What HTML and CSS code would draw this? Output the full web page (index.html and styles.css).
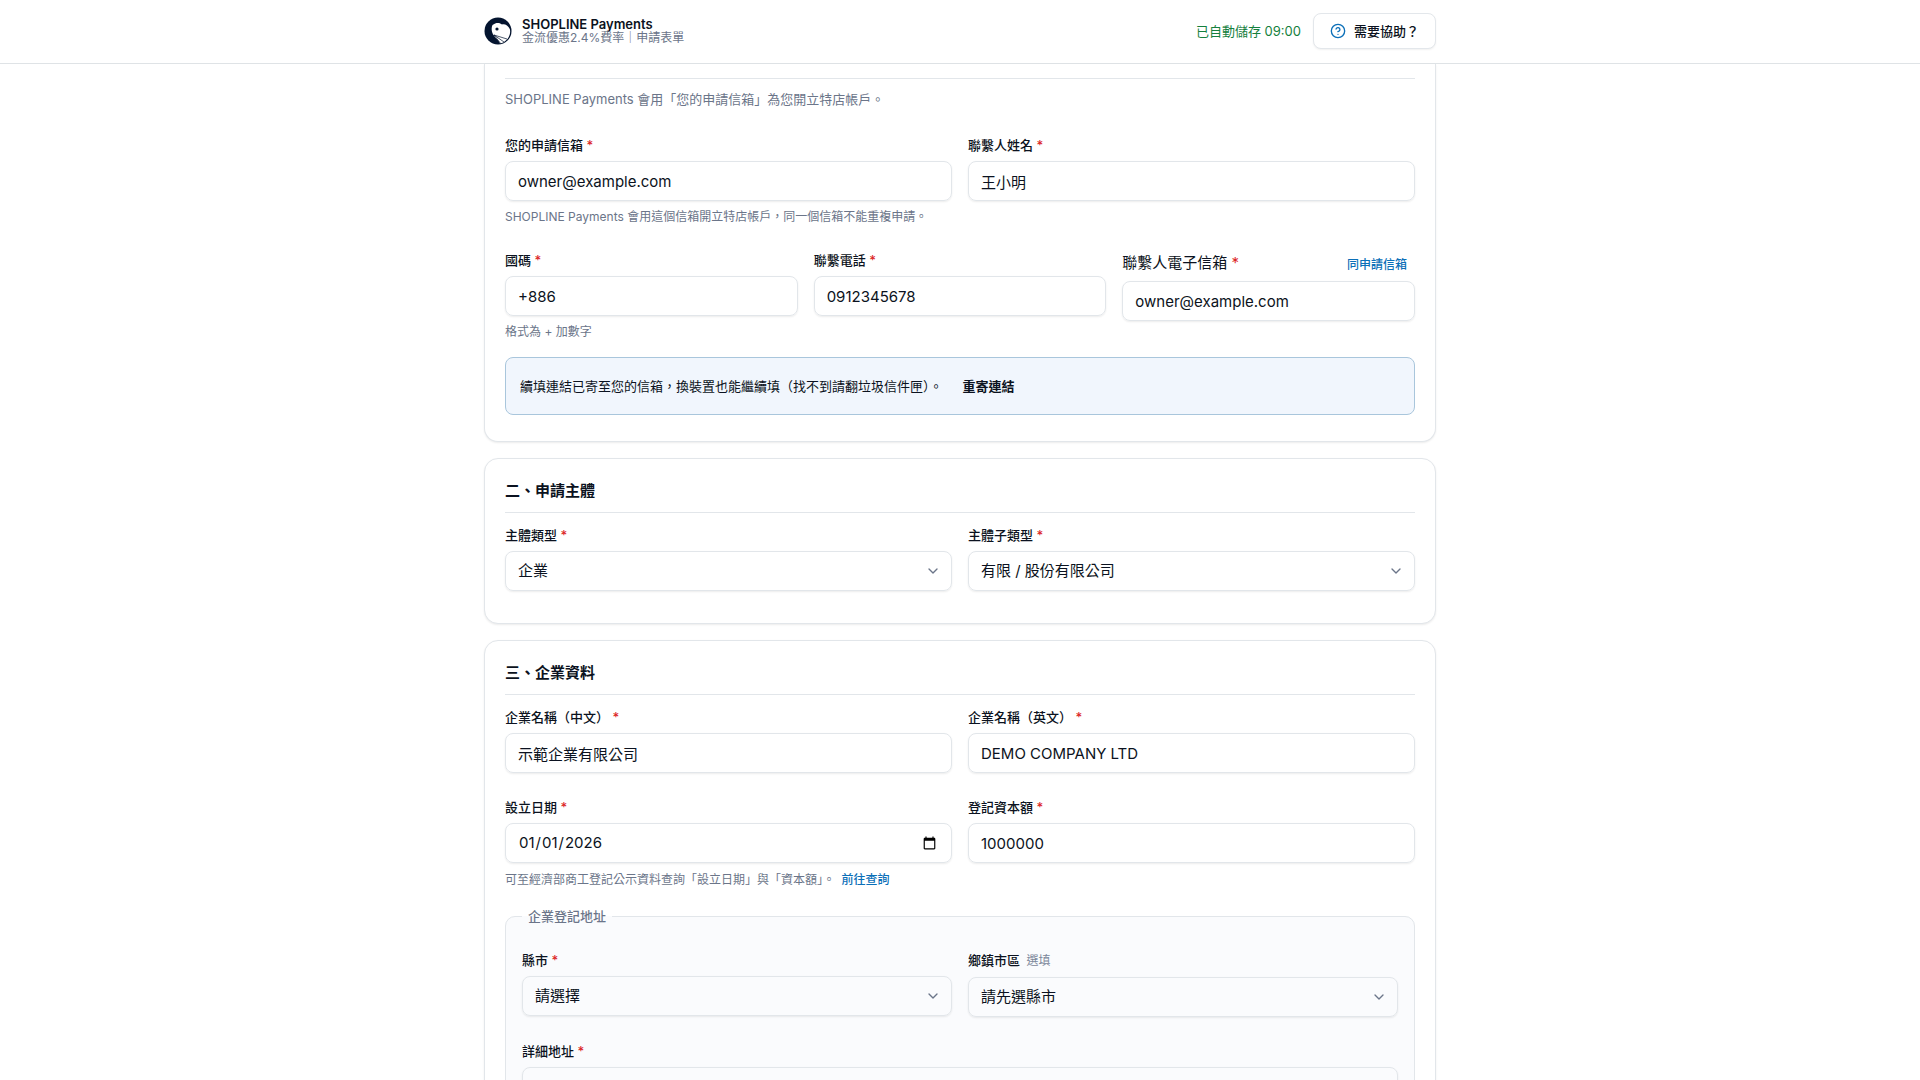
FILE: index.html
```html
<!DOCTYPE html>
<html lang="zh-Hant">
<head>
    <meta charset="UTF-8">
    <meta name="viewport" content="width=device-width, initial-scale=1.0">
    <title>SHOPLINE Payments</title>
    <link rel="stylesheet" href="styles.css">
</head>
<body>
    <header class="topbar">
        <div class="topbar-inner">
            <svg class="logo" viewBox="0 0 28 28" aria-hidden="true">
                <circle cx="14" cy="14" r="13.500" fill="#04142f"/>
                <path d="M8.500 8C12 5 16 5.500 18 7.500C21 6.800 24 8.500 25.800 12C27.500 18 23 25 16 26.500C15 23.500 11 21 10 18.500C7.500 16 7 11 8.500 8Z" fill="#fff"/>
                <circle cx="13" cy="12" r="1.600" fill="#04142f"/>
                <path d="M10 18L23 22M10 18L20 25M10 18L17 27" fill="none" stroke="#04142f" stroke-width=".7"/>
            </svg>
            <div class="brand">
                <strong>SHOPLINE Payments</strong>
                <span>金流優惠2.4%費率｜申請表單</span>
            </div>
            <span class="saved">已自動儲存 09:00</span>
            <button type="button" class="help">
                <svg viewBox="0 0 24 24" aria-hidden="true"><circle cx="12" cy="12" r="10"/><path d="M9.090 9a3 3 0 0 1 5.830 1c0 2-3 3-3 3M12 17h.01"/></svg>
                需要協助？
            </button>
        </div>
    </header>

    <main class="page">
        <!-- 聯絡資料 -->
        <section class="card card-first">
            <p class="intro">SHOPLINE Payments 會用「您的申請信箱」為您開立特店帳戶。</p>
            <div class="row two">
                <div class="field">
                    <label for="apply-email">您的申請信箱 <i>*</i></label>
                    <input type="email" id="apply-email" value="owner@example.com">
                    <p class="hint">SHOPLINE Payments 會用這個信箱開立特店帳戶，同一個信箱不能重複申請。</p>
                </div>
                <div class="field">
                    <label for="contact-name">聯繫人姓名 <i>*</i></label>
                    <input type="text" id="contact-name" value="王小明">
                </div>
            </div>
            <div class="row three">
                <div class="field">
                    <label for="country-code">國碼 <i>*</i></label>
                    <input type="text" id="country-code" value="+886">
                    <p class="hint">格式為 + 加數字</p>
                </div>
                <div class="field">
                    <label for="phone">聯繫電話 <i>*</i></label>
                    <input type="tel" id="phone" value="0912345678">
                </div>
                <div class="field">
                    <div class="label-line">
                        <label for="contact-email">聯繫人電子信箱 <i>*</i></label>
                        <button type="button" class="link">同申請信箱</button>
                    </div>
                    <input type="email" id="contact-email" value="owner@example.com">
                </div>
            </div>
            <div class="notice">
                <span>續填連結已寄至您的信箱，換裝置也能繼續填（找不到請翻垃圾信件匣）。</span>
                <button type="button">重寄連結</button>
            </div>
        </section>

        <!-- 申請主體 -->
        <section class="card">
            <h2>二、申請主體</h2>
            <div class="row two">
                <div class="field">
                    <label for="entity-type">主體類型 <i>*</i></label>
                    <div class="select">
                        <select id="entity-type"><option>企業</option></select>
                        <svg viewBox="0 0 24 24" aria-hidden="true"><path d="m6 9 6 6 6-6"/></svg>
                    </div>
                </div>
                <div class="field">
                    <label for="entity-subtype">主體子類型 <i>*</i></label>
                    <div class="select">
                        <select id="entity-subtype"><option>有限 / 股份有限公司</option></select>
                        <svg viewBox="0 0 24 24" aria-hidden="true"><path d="m6 9 6 6 6-6"/></svg>
                    </div>
                </div>
            </div>
        </section>

        <!-- 企業資料 -->
        <section class="card">
            <h2>三、企業資料</h2>
            <div class="row two">
                <div class="field">
                    <label for="name-zh">企業名稱（中文） <i>*</i></label>
                    <input type="text" id="name-zh" value="示範企業有限公司">
                </div>
                <div class="field">
                    <label for="name-en">企業名稱（英文） <i>*</i></label>
                    <input type="text" id="name-en" value="DEMO COMPANY LTD">
                </div>
            </div>
            <div class="row two">
                <div class="field">
                    <label for="founded">設立日期 <i>*</i></label>
                    <input type="date" id="founded" value="2026-01-01">
                    <p class="hint">可至經濟部商工登記公示資料查詢「設立日期」與「資本額」。 <a href="#">前往查詢</a></p>
                </div>
                <div class="field">
                    <label for="capital">登記資本額 <i>*</i></label>
                    <input type="text" id="capital" value="1000000">
                </div>
            </div>
            <fieldset class="address">
                <legend>企業登記地址</legend>
                <div class="row two">
                    <div class="field">
                        <label for="city">縣市 <i>*</i></label>
                        <div class="select">
                            <select id="city"><option>請選擇</option></select>
                            <svg viewBox="0 0 24 24" aria-hidden="true"><path d="m6 9 6 6 6-6"/></svg>
                        </div>
                    </div>
                    <div class="field">
                        <label for="district">鄉鎮市區 <small>選填</small></label>
                        <div class="select">
                            <select id="district"><option>請先選縣市</option></select>
                            <svg viewBox="0 0 24 24" aria-hidden="true"><path d="m6 9 6 6 6-6"/></svg>
                        </div>
                    </div>
                </div>
                <div class="row">
                    <div class="field">
                        <label for="street">詳細地址 <i>*</i></label>
                        <input type="text" id="street">
                    </div>
                </div>
            </fieldset>
        </section>
    </main>
</body>
</html>
```
FILE: styles.css
```css
* {
    box-sizing: border-box;
}
body {
    margin: 0;
    height: 100vh;
    overflow: hidden;
    background: #fff;
    color: #0b1220;
    font-family: Inter, "Noto Sans CJK TC", sans-serif;
    font-size: 15px;
    line-height: 24px;
}
p, h2 {
    margin: 0;
}
button, input, select {
    font: inherit;
    color: inherit;
}
button {
    cursor: pointer;
}

/* Header */
.topbar {
    height: 64px;
    border-bottom: 1px solid #dfe3e6;
    background: #fff;
}
.topbar-inner {
    display: flex;
    align-items: center;
    max-width: 952px;
    height: 100%;
    margin: 0 auto;
    padding-bottom: 1px;
}
.logo {
    width: 28px;
    height: 28px;
}
.brand {
    display: flex;
    flex-direction: column;
    margin-left: 10px;
    margin-right: auto;
    font-size: 13px;
    line-height: 14px;
}
.brand strong {
    font-weight: 600;
}
.brand span {
    font-size: 12px;
    color: #6b7589;
}
.saved {
    font-size: 13px;
    color: #15803d;
}
.help {
    display: flex;
    align-items: center;
    gap: 8px;
    height: 36px;
    margin-left: 12px;
    padding: 0 16px;
    border: 1px solid #e3e7eb;
    border-radius: 8px;
    background: #fff;
    box-shadow: 0 1px 2px rgba(0, 0, 0, 0.06);
    font-size: 13px;
    font-weight: 500;
}
.help svg {
    width: 16px;
    height: 16px;
    fill: none;
    stroke: #0b6fb8;
    stroke-width: 2;
    stroke-linecap: round;
    stroke-linejoin: round;
}

/* Cards */
.page {
    display: flex;
    flex-direction: column;
    gap: 16px;
    max-width: 952px;
    margin: 0 auto;
}
.card {
    padding: 20px 20px 32px;
    border: 1px solid #e2e6ea;
    border-radius: 14px;
    background: #fff;
    box-shadow: 0 1px 2px rgba(0, 0, 0, 0.08);
}
.card-first {
    padding-top: 14px;
    padding-bottom: 26px;
    border-top: 0;
    border-radius: 0 0 14px 14px;
}
.card h2 {
    margin-bottom: 12px;
    padding-bottom: 9px;
    border-bottom: 1px solid #e2e6ea;
    font-size: 15px;
    font-weight: 600;
    line-height: 24px;
}
.intro {
    margin-bottom: 24px;
    padding: 9px 0 1px;
    border-top: 1px solid #e2e6ea;
    font-size: 13px;
    line-height: 22px;
    color: #6b7589;
}

/* Fields */
.row {
    display: grid;
    gap: 16px;
    align-items: start;
}
.row + .row {
    margin-top: 24px;
}
.two {
    grid-template-columns: repeat(2, 1fr);
}
.three {
    grid-template-columns: repeat(3, 1fr);
}
.field {
    display: flex;
    flex-direction: column;
    gap: 6px;
}
.field label {
    font-size: 13px;
    font-weight: 500;
    line-height: 20px;
}
.field i {
    font-style: normal;
    color: #dc2626;
}
.field small {
    margin-left: 3px;
    font-size: 12px;
    font-weight: 400;
    color: #7c879a;
}
.field input, .field select {
    width: 100%;
    height: 40px;
    padding: 0 12px;
    border: 1px solid #e2e6ea;
    border-radius: 8px;
    background: transparent;
    box-shadow: 0 1px 2px rgba(0, 0, 0, 0.08);
}
.field select {
    appearance: none;
}
.select {
    display: grid;
    align-items: center;
}
.select > * {
    grid-area: 1 / 1;
}
.select svg {
    justify-self: end;
    width: 16px;
    height: 16px;
    margin-right: 11px;
    fill: none;
    stroke: #6b7589;
    stroke-width: 2;
    stroke-linecap: round;
    stroke-linejoin: round;
    pointer-events: none;
}
.label-line {
    display: flex;
    align-items: center;
    justify-content: space-between;
    padding-right: 8px;
}
.field .label-line label {
    font-size: 15px;
    font-weight: 400;
    line-height: 25px;
}
.link {
    padding: 4px 0 0;
    border: 0;
    background: none;
    font-size: 12px;
    font-weight: 500;
    line-height: 20px;
    color: #0b6fb8;
}
.hint {
    font-size: 12px;
    line-height: 19px;
    color: #6b7589;
}
.hint a {
    display: inline-block;
    margin-left: 3px;
    padding: 1px 0;
    font-weight: 500;
    color: #0b6fb8;
    text-decoration: none;
}

.notice {
    display: flex;
    align-items: center;
    gap: 20px;
    min-height: 58px;
    margin-top: 16px;
    padding: 0 14px;
    border: 1px solid #a9c6dc;
    border-radius: 8px;
    background: #f1f6fd;
    font-size: 13px;
}
.notice button {
    padding: 0;
    border: 0;
    background: none;
    font-weight: 600;
}

.address {
    margin: 16px 0 0;
    padding: 24px 16px;
    border: 1px solid #e2e6ea;
    border-radius: 10px;
    background: #fafbfd;
}
.address legend {
    padding: 0 6px;
    font-size: 13px;
    font-weight: 500;
    line-height: 20px;
    color: #6b7589;
}
```
